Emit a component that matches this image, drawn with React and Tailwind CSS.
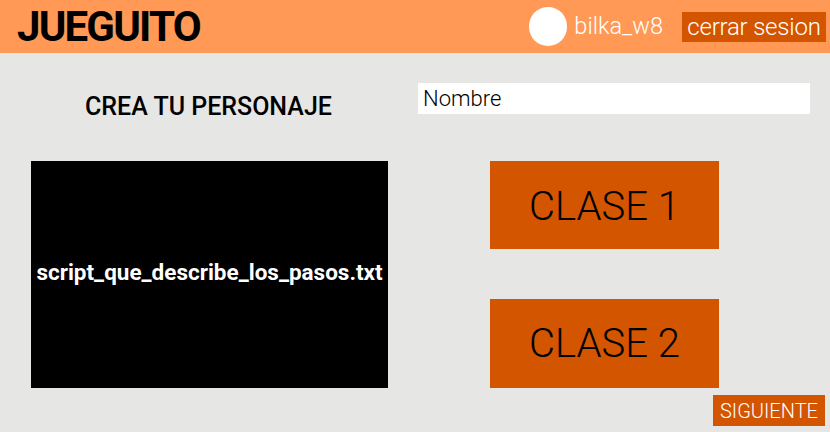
export default function App() {
  return (
    <div className="w-[830px] h-[432px] overflow-hidden bg-[#e6e6e4] font-['Roboto',sans-serif]">
      {/* header */}
      <header className="h-[53px] bg-[#ff9955] flex items-center pl-[17px] pr-[4px]">
        <h1 className="text-[42px] font-bold tracking-[-1.8px] text-black leading-none flex-1">JUEGUITO</h1>
        <div className="w-[38px] h-[39px] rounded-full bg-white" />
        <span className="ml-[7px] text-[23.5px] font-light text-white leading-none">bilka_w8</span>
        <button className="ml-[19px] h-[30px] w-[144px] bg-[#d45500] text-white text-[24px] font-light leading-none tracking-[-0.2px]">
          cerrar sesion
        </button>
      </header>

      <div className="flex">
        {/* left column */}
        <div className="w-[415px] flex flex-col">
          <h2 className="mt-[39px] ml-[85px] text-[25px] font-medium text-black leading-[30px]">CREA TU PERSONAJE</h2>
          <div className="mt-[39px] ml-[31px] w-[357px] h-[227px] bg-black flex items-center justify-center pb-[4px]">
            <span className="text-white text-[22.5px] font-bold">script_que_describe_los_pasos.txt</span>
          </div>
        </div>

        {/* right column */}
        <div className="w-[415px] flex flex-col">
          <div className="mt-[30px] ml-[3px] w-[392px] h-[31px] bg-white flex items-center pl-[5px]">
            <span className="text-[22px] font-light text-black leading-none">Nombre</span>
          </div>
          <button className="mt-[47px] ml-[75px] w-[229px] h-[88px] bg-[#d45500] text-black text-[40px] font-light leading-none pt-[3px]">
            CLASE 1
          </button>
          <button className="mt-[50px] ml-[75px] w-[229px] h-[89px] bg-[#d45500] text-black text-[40px] font-light leading-none">
            CLASE 2
          </button>
          <div className="flex justify-end pr-[5px] mt-[7px]">
            <button className="w-[112px] h-[31px] bg-[#d45500] text-white text-[20px] font-light leading-none">
              SIGUIENTE
            </button>
          </div>
        </div>
      </div>
    </div>
  );
}
